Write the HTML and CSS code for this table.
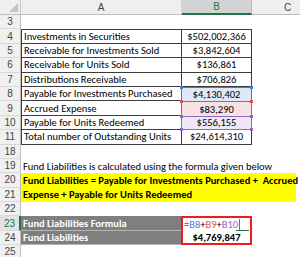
FILE: index.html
```html
<!DOCTYPE html>
<html>
<head>
<meta charset="utf-8">
<link rel="stylesheet" href="styles.css">
</head>
<body>
<div class="sheet">
  <div class="corner"><span class="tri"></span></div>
  <div class="colhead">A</div>
  <div class="colhead sel">B</div>
  <div class="colhead c-head">C</div>

  <div class="rh">3</div><div class="cell span-all"></div>

  <div class="rh">4</div><div class="cell ta first">Investments in Securities</div><div class="cell tb first">$502,002,366</div><div class="cell rest"></div>
  <div class="rh">5</div><div class="cell ta">Receivable for Investments Sold</div><div class="cell tb">$3,842,604</div><div class="cell rest"></div>
  <div class="rh">6</div><div class="cell ta">Receivable for Units Sold</div><div class="cell tb">$136,861</div><div class="cell rest"></div>
  <div class="rh">7</div><div class="cell ta">Distributions Receivable</div><div class="cell tb">$706,826</div><div class="cell rest"></div>
  <div class="rh">8</div><div class="cell ta">Payable for Investments Purchased</div><div class="cell tb hl hl-blue"><i class="h tl"></i><i class="h tr"></i>$4,130,402</div><div class="cell rest"></div>
  <div class="rh">9</div><div class="cell ta">Accrued Expense</div><div class="cell tb hl hl-red"><i class="h tl"></i><i class="h tr"></i>$83,290</div><div class="cell rest"></div>
  <div class="rh">10</div><div class="cell ta">Payable for Units Redeemed</div><div class="cell tb hl hl-purple"><i class="h tl"></i><i class="h tr"></i><i class="h bl"></i><i class="h br"></i>$556,155</div><div class="cell rest"></div>
  <div class="rh">11</div><div class="cell ta">Total number of Outstanding Units</div><div class="cell tb">$24,614,310</div><div class="cell rest"></div>

  <div class="rh">18</div><div class="cell span-all"></div>
  <div class="rh">19</div><div class="cell span-all">Fund Liabilities is calculated using the formula given below</div>
  <div class="rh">20</div><div class="cell yellow">Fund Liabilities = Payable for Investments Purchased +&nbsp; Accrued</div><div class="cell end"></div>
  <div class="rh">21</div><div class="cell yellow">Expense + Payable for Units Redeemed</div><div class="cell end"></div>
  <div class="rh">22</div><div class="cell span-all"></div>

  <div class="rh active">23</div><div class="cell gray">Fund Liabilities Formula</div><div class="cell box-top"><span class="op">=</span><span class="r-blue">B8</span><span class="op">+</span><span class="r-red">B9</span><span class="op">+</span><span class="r-purple">B10</span><span class="caret"></span><span class="green-mark"></span></div><div class="cell rest"></div>
  <div class="rh">24</div><div class="cell gray">Fund Liabilities</div><div class="cell box-bot">$4,769,847</div><div class="cell rest"></div>
  <div class="rh">25</div><div class="cell span-all"></div>
</div>
</body>
</html>
```

FILE: styles.css
```css
html, body {
  margin: 0;
  padding: 0;
  background: #ffffff;
}

body {
  font-family: Carlito, Lato, "Liberation Sans", sans-serif;
  font-size: 10.5px;
  color: #000000;
  overflow: hidden;
}

.sheet {
  display: grid;
  grid-template-columns: 21px 161px 70px 44px 1fr;
  grid-template-rows: 15px repeat(17, 14.4px);
  width: 300px;
}

.corner {
  position: relative;
  background: #efefef;
  border-right: 1px solid #c8c8c8;
  border-bottom: 1px solid #bdbdbd;
  box-sizing: border-box;
}

.tri {
  position: absolute;
  right: 2px;
  bottom: 2px;
  width: 0;
  height: 0;
  border-left: 9px solid transparent;
  border-bottom: 9px solid #c4c4c4;
}

.colhead {
  background: #efefef;
  color: #444444;
  font-family: "Liberation Sans", sans-serif;
  font-size: 10px;
  display: flex;
  align-items: center;
  justify-content: center;
  border-right: 1px solid #d0d0d0;
  border-bottom: 1px solid #bdbdbd;
  box-sizing: border-box;
}

.colhead.sel {
  background: #d3d3d3;
  color: #217346;
  border-bottom: 2px solid #217346;
  border-right: 1px solid #bcbcbc;
}

.colhead.c-head {
  grid-column: 4 / 6;
  justify-content: flex-start;
  padding-left: 32px;
  border-right: none;
}

.rh {
  grid-column: 1;
  background: #f0f0f0;
  color: #444444;
  font-family: "Liberation Sans", sans-serif;
  font-size: 10px;
  display: flex;
  align-items: center;
  justify-content: center;
  border-right: 1px solid #bdbdbd;
  border-bottom: 1px solid #d8d8d8;
  box-sizing: border-box;
}

.rh.active {
  color: #217346;
  background: #e2e2e2;
  border-right: 2px solid #217346;
}

.cell {
  display: flex;
  align-items: center;
  padding: 0 2px;
  box-sizing: border-box;
  white-space: nowrap;
  overflow: visible;
  min-width: 0;
}

.span-all {
  grid-column: 2 / 6;
}

.rest {
  grid-column: 4 / 6;
}

.end {
  grid-column: 5 / 6;
}

.ta {
  border-left: 1px solid #3c3c3c;
  border-right: 1px solid #3c3c3c;
  border-bottom: 1px solid #3c3c3c;
}

.tb {
  justify-content: center;
  border-right: 1px solid #3c3c3c;
  border-bottom: 1px solid #3c3c3c;
}

.ta.first, .tb.first {
  border-top: 1px solid #3c3c3c;
}

.hl {
  position: relative;
  margin-left: -1px;
}

.hl-blue {
  background: #dfe8f7;
  border: 1px solid #4a78d0;
  border-bottom: none;
}

.hl-red {
  background: #f7e1e1;
  border: 1px solid #d45353;
  border-bottom: none;
}

.hl-purple {
  background: #ede7f6;
  border: 1px solid #8d66cc;
}

.h {
  position: absolute;
  width: 3px;
  height: 3px;
}

.hl-blue .h { background: #4a78d0; }
.hl-red .h { background: #d45353; }
.hl-purple .h { background: #8d66cc; }

.h.tl { left: -2px; top: -2px; }
.h.tr { right: -2px; top: -2px; }
.h.bl { left: -2px; bottom: -2px; }
.h.br { right: -2px; bottom: -2px; }

.yellow {
  grid-column: 2 / 5;
  background: #ffff00;
  font-weight: bold;
}

.gray {
  background: #7f7f7f;
  color: #ffffff;
  font-weight: bold;
  border-bottom: 1px solid #b4b4b4;
}

.box-top {
  position: relative;
  margin-left: -1px;
  border: 2px solid #ee1c1c;
  border-bottom: none;
  padding-left: 1px;
}

.box-bot {
  margin-left: -1px;
  justify-content: center;
  font-weight: bold;
  border: 2px solid #ee1c1c;
  border-top: none;
}

.op { color: #000000; }
.r-blue { color: #4f7ad6; }
.r-red { color: #dc4e4e; }
.r-purple { color: #9266d2; }

.caret {
  width: 1px;
  height: 11px;
  background: #6a6a6a;
  margin-left: 1px;
}

.green-mark {
  position: absolute;
  right: 1px;
  bottom: 0;
  width: 13px;
  height: 1px;
  background: #217346;
}
```
